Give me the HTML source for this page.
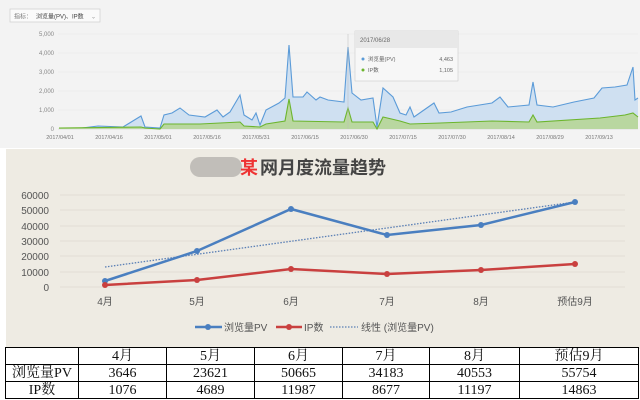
<!DOCTYPE html>
<html><head><meta charset="utf-8"><style>
body{margin:0;width:640px;height:400px;overflow:hidden;background:#fff;font-family:"Liberation Sans","Noto Sans CJK SC",sans-serif;position:relative}
.top{position:absolute;left:0;top:0;width:640px;height:148px;background:#f3f3f3}
.bot{position:absolute;left:6px;top:149px;width:634px;height:200px;background:#eeebe3}
table{position:absolute;left:5px;top:347px;border-collapse:collapse;font-family:"Liberation Serif","Noto Serif CJK SC",serif;font-size:14px;color:#111;background:#fff}
td{border:1.5px solid #000;text-align:center;padding:0;height:16px;line-height:15px}
</style></head><body>
<div class="top"></div>
<div class="bot"></div>
<svg width="640" height="400" style="position:absolute;left:0;top:0" font-family="Liberation Sans, Noto Sans CJK SC, sans-serif">
<rect x="10" y="9" width="90" height="13" fill="#fafafa" stroke="#ccc" stroke-width="0.7"/>
<text x="14" y="18.5" font-size="6" fill="#777">指标：</text><text x="36" y="18.5" font-size="6" fill="#444">浏览量(PV)、IP数</text>
<text x="91" y="18.5" font-size="6" fill="#999">⌄</text>
<g stroke="#e6e6e6" stroke-width="0.6"><line x1="58" y1="34" x2="638" y2="34"/><line x1="58" y1="53" x2="638" y2="53"/><line x1="58" y1="72" x2="638" y2="72"/><line x1="58" y1="91" x2="638" y2="91"/><line x1="58" y1="110" x2="638" y2="110"/><line x1="58" y1="129" x2="638" y2="129" stroke="#ccc"/></g>
<g font-size="6" fill="#888" text-anchor="end"><text x="54" y="36">5,000</text><text x="54" y="55">4,000</text><text x="54" y="74">3,000</text><text x="54" y="93">2,000</text><text x="54" y="112">1,000</text><text x="54" y="131">0</text></g>
<g font-size="5.5" fill="#777" text-anchor="middle"><text x="60" y="139">2017/04/01</text><text x="109" y="139">2017/04/16</text><text x="158" y="139">2017/05/01</text><text x="207" y="139">2017/05/16</text><text x="256" y="139">2017/05/31</text><text x="305" y="139">2017/06/15</text><text x="354" y="139">2017/06/30</text><text x="403" y="139">2017/07/15</text><text x="452" y="139">2017/07/30</text><text x="501" y="139">2017/08/14</text><text x="550" y="139">2017/08/29</text><text x="599" y="139">2017/09/13</text></g>
<polygon fill="#cfe0f1" points="59,129 59,128 82,128 98,126 123,127 141,116 145,127 160,128 164,115 172,113 180,108 189,115 205,117 217,110 223,117 230,112 240,95 244,115 252,120 256,113 260,125 266,110 279,103 285,98 289,45 293,97 303,97 307,92 316,100 320,97 328,100 344,102 348,47 352,93 361,100 373,98 377,127 383,88 393,97 400,113 406,115 410,107 414,117 434,103 439,113 451,112 467,107 492,103 500,97 508,107 529,105 533,82 537,105 553,107 574,102 594,98 602,88 615,87 627,85 633,67 635,100 638,98 638,129"/>
<polyline fill="none" stroke="#5b9bd8" stroke-width="1.1" points="59,128 82,128 98,126 123,127 141,116 145,127 160,128 164,115 172,113 180,108 189,115 205,117 217,110 223,117 230,112 240,95 244,115 252,120 256,113 260,125 266,110 279,103 285,98 289,45 293,97 303,97 307,92 316,100 320,97 328,100 344,102 348,47 352,93 361,100 373,98 377,127 383,88 393,97 400,113 406,115 410,107 414,117 434,103 439,113 451,112 467,107 492,103 500,97 508,107 529,105 533,82 537,105 553,107 574,102 594,98 602,88 615,87 627,85 633,67 635,100 638,98"/>
<polygon fill="#b9d7a0" points="59,129 59,128 141,127 145,128 160,129 164,124 200,124 240,122 244,126 260,127 266,124 285,121 289,99 293,121 344,122 348,108 352,122 373,122 377,129 383,117 400,121 410,124 440,123 492,121 529,122 533,115 537,122 600,118 625,115 633,113 638,117 638,129"/>
<polyline fill="none" stroke="#6cb52d" stroke-width="1.1" points="59,128 141,127 145,128 160,129 164,124 200,124 240,122 244,126 260,127 266,124 285,121 289,99 293,121 344,122 348,108 352,122 373,122 377,129 383,117 400,121 410,124 440,123 492,121 529,122 533,115 537,122 600,118 625,115 633,113 638,117"/>
<line x1="348" y1="34" x2="348" y2="129" stroke="#bbb" stroke-width="0.5"/>
<rect x="355" y="31" width="103" height="50" fill="#f7f7f7" stroke="#ccc" stroke-width="0.6"/>
<rect x="355" y="31" width="103" height="17" fill="#e8e8e8"/>
<text x="360" y="42" font-size="6" fill="#666">2017/06/28</text>
<circle cx="363" cy="59" r="1.5" fill="#5b9bd8"/><text x="368" y="61" font-size="5.5" fill="#666">浏览量(PV)</text><text x="453" y="61" font-size="5.5" fill="#666" text-anchor="end">4,463</text>
<circle cx="363" cy="70" r="1.5" fill="#6cb52d"/><text x="368" y="72" font-size="5.5" fill="#666">IP数</text><text x="453" y="72" font-size="5.5" fill="#666" text-anchor="end">1,105</text>
<rect x="190" y="157" width="52" height="20" rx="10" fill="#b5b3ae" opacity="0.8"/>
<text x="240" y="174" font-size="18" fill="#e33" font-weight="bold">某</text>
<text x="260" y="174" font-size="18" fill="#444" font-weight="bold">网月度流量趋势</text>
<g stroke="#dcd9d0" stroke-width="0.7"><line x1="60" y1="195" x2="625" y2="195"/><line x1="60" y1="210" x2="625" y2="210"/><line x1="60" y1="226" x2="625" y2="226"/><line x1="60" y1="241" x2="625" y2="241"/><line x1="60" y1="256" x2="625" y2="256"/><line x1="60" y1="272" x2="625" y2="272"/><line x1="60" y1="287" x2="625" y2="287"/></g>
<g font-size="10" fill="#555" text-anchor="end"><text x="49" y="199">60000</text><text x="49" y="214">50000</text><text x="49" y="230">40000</text><text x="49" y="245">30000</text><text x="49" y="260">20000</text><text x="49" y="276">10000</text><text x="49" y="291">0</text></g>
<g font-size="10" fill="#555" text-anchor="middle"><text x="105" y="305">4月</text><text x="197" y="305">5月</text><text x="291" y="305">6月</text><text x="387" y="305">7月</text><text x="481" y="305">8月</text><text x="575" y="305">预估9月</text></g>
<line x1="105" y1="267" x2="575" y2="202" stroke="#5a7fb5" stroke-width="1.3" stroke-dasharray="1.5,1.5"/>
<polyline fill="none" stroke="#4a7fc0" stroke-width="2.5" points="105,281 197,251 291,209 387,235 481,225 575,202"/>
<g fill="#4a7fc0"><circle cx="105" cy="281" r="3"/><circle cx="197" cy="251" r="3"/><circle cx="291" cy="209" r="3"/><circle cx="387" cy="235" r="3"/><circle cx="481" cy="225" r="3"/><circle cx="575" cy="202" r="3"/></g>
<polyline fill="none" stroke="#c9403f" stroke-width="2.5" points="105,285 197,280 291,269 387,274 481,270 575,264"/>
<g fill="#c9403f"><circle cx="105" cy="285" r="3"/><circle cx="197" cy="280" r="3"/><circle cx="291" cy="269" r="3"/><circle cx="387" cy="274" r="3"/><circle cx="481" cy="270" r="3"/><circle cx="575" cy="264" r="3"/></g>
<line x1="195" y1="327" x2="222" y2="327" stroke="#4a7fc0" stroke-width="2.5"/><circle cx="208" cy="327" r="3" fill="#4a7fc0"/>
<text x="224" y="331" font-size="10" fill="#555">浏览量PV</text>
<line x1="276" y1="327" x2="302" y2="327" stroke="#c9403f" stroke-width="2.5"/><circle cx="289" cy="327" r="3" fill="#c9403f"/>
<text x="304" y="331" font-size="10" fill="#555">IP数</text>
<line x1="330" y1="327" x2="358" y2="327" stroke="#5a7fb5" stroke-width="1.3" stroke-dasharray="1.5,1.5"/>
<text x="361" y="331" font-size="10" fill="#555">线性 (浏览量PV)</text>
</svg>
<table>
<tr><td style="width:72px"></td><td style="width:87px">4月</td><td style="width:87px">5月</td><td style="width:87px">6月</td><td style="width:86px">7月</td><td style="width:89px">8月</td><td style="width:118px">预估9月</td></tr>
<tr><td>浏览量PV</td><td>3646</td><td>23621</td><td>50665</td><td>34183</td><td>40553</td><td>55754</td></tr>
<tr><td>IP数</td><td>1076</td><td>4689</td><td>11987</td><td>8677</td><td>11197</td><td>14863</td></tr>
</table>
</body></html>
